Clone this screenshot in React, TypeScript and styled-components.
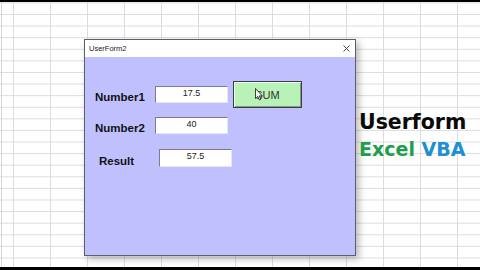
import React from "react";
import styled, { createGlobalStyle } from "styled-components";

const GlobalStyle = createGlobalStyle`
  html, body { margin: 0; padding: 0; width: 480px; height: 270px; overflow: hidden; background: #000; }
  #root { width: 480px; height: 270px; }
`;

const Screen = styled.div`
  width: 480px;
  height: 270px;
  box-sizing: border-box;
  padding: 2px 0 3px;
  background: #000;
  display: flex;
  flex-direction: column;
`;

const Sheet = styled.div`
  flex: 1;
  display: flex;
  align-items: flex-start;
  gap: 3px;
  padding: 37px 0 0 84px;
  background-color: #fff;
  background-image:
    linear-gradient(to right, transparent 1px, #d6d6d6 1px, #d6d6d6 2px, transparent 2px),
    linear-gradient(to right, #dcdcdc 1px, transparent 1px),
    linear-gradient(to bottom, #dcdcdc 1px, transparent 1px);
  background-size: 3px 100%, 37px 100%, 100% 11.6px;
  background-repeat: no-repeat, repeat, repeat;
  background-position: 0 0, 13px 0, 0 12px;
`;

const Window = styled.div`
  width: 272px;
  height: 217px;
  box-sizing: border-box;
  border: 1px solid #5e5e6e;
  display: flex;
  flex-direction: column;
  box-shadow: 3px 3px 7px rgba(0, 0, 0, 0.28);
`;

const TitleBar = styled.div`
  height: 17px;
  background: #fff;
  display: flex;
  align-items: center;
  justify-content: space-between;
  padding: 0 5px 0 4px;
  font-family: "Liberation Sans", Arial, sans-serif;
  font-size: 7.5px;
  color: #222;
`;

const Client = styled.div`
  flex: 1;
  background: #c0c0ff;
  padding: 24px 0 0 10px;
  display: flex;
  flex-direction: column;
`;

const Row = styled.div<{ $top?: number; $indent?: number; $h: number }>`
  display: flex;
  align-items: center;
  height: ${(p) => p.$h}px;
  margin-top: ${(p) => p.$top ?? 0}px;
  padding-left: ${(p) => p.$indent ?? 0}px;
`;

const Label = styled.div`
  width: 60px;
  padding-top: 5px;
  font-family: "Liberation Sans", Arial, sans-serif;
  font-weight: bold;
  font-size: 11.5px;
  color: #111;
`;

const TextBox = styled.div<{ $h?: number }>`
  width: 73px;
  height: ${(p) => p.$h ?? 17}px;
  box-sizing: border-box;
  background: #fff;
  border: 1px solid;
  border-color: #7c7c8c #e6e6f0 #e6e6f0 #7c7c8c;
  display: flex;
  justify-content: center;
  align-items: center;
  padding-bottom: 4px;
  font-family: "Liberation Sans", Arial, sans-serif;
  font-size: 9px;
  color: #222;
`;

const Button = styled.div`
  position: relative;
  margin-left: 5px;
  width: 69px;
  height: 27px;
  box-sizing: border-box;
  background: #b9f2b6;
  border: 1px solid #3c3c48;
  box-shadow: inset 1px 1px 0 #eaffe8, inset -1px -1px 0 #7f9c80;
  display: flex;
  justify-content: center;
  align-items: center;
  font-family: "Liberation Sans", Arial, sans-serif;
  font-size: 11px;
  color: #333;
`;

const Cursor = styled.svg`
  position: absolute;
  left: 21px;
  top: 6px;
`;

const Caption = styled.div`
  margin-top: 73px;
  display: flex;
  flex-direction: column;
  gap: 8px;
  font-family: "DejaVu Sans", sans-serif;
  font-weight: bold;
`;

const BigTitle = styled.div`
  font-size: 20.5px;
  line-height: 20px;
  color: #0a0a0a;
`;

const SubTitle = styled.div`
  font-size: 19px;
  line-height: 19px;
  white-space: nowrap;
`;

const Word = styled.span<{ $c: string }>`
  color: ${(p) => p.$c};
`;

export default function App() {
  return (
    <>
      <GlobalStyle />
      <Screen>
        <Sheet>
          <Window>
            <TitleBar>
              <span>UserForm2</span>
              <svg width="7" height="7" viewBox="0 0 7 7">
                <path d="M0.5 0.5 L6.5 6.5 M6.5 0.5 L0.5 6.5" stroke="#333" strokeWidth="0.9" />
              </svg>
            </TitleBar>
            <Client>
              <Row $h={27}>
                <Label>Number1</Label>
                <TextBox>17.5</TextBox>
                <Button>
                  SUM
                  <Cursor width="8" height="13" viewBox="0 0 8 13">
                    <path d="M0.5 0.5 L0.5 10.5 L2.8 8.4 L4.4 12 L5.8 11.4 L4.3 7.9 L7.3 7.9 Z" fill="#fff" stroke="#111" strokeWidth="0.8" strokeLinejoin="round" />
                  </Cursor>
                </Button>
              </Row>
              <Row $h={17} $top={9}>
                <Label>Number2</Label>
                <TextBox>40</TextBox>
              </Row>
              <Row $h={18} $top={15} $indent={4}>
                <Label>Result</Label>
                <TextBox $h={18}>57.5</TextBox>
              </Row>
            </Client>
          </Window>
          <Caption>
            <BigTitle>Userform</BigTitle>
            <SubTitle>
              <Word $c="#1f9e4b">Excel</Word> <Word $c="#1d8fd2">VBA</Word>
            </SubTitle>
          </Caption>
        </Sheet>
      </Screen>
    </>
  );
}
